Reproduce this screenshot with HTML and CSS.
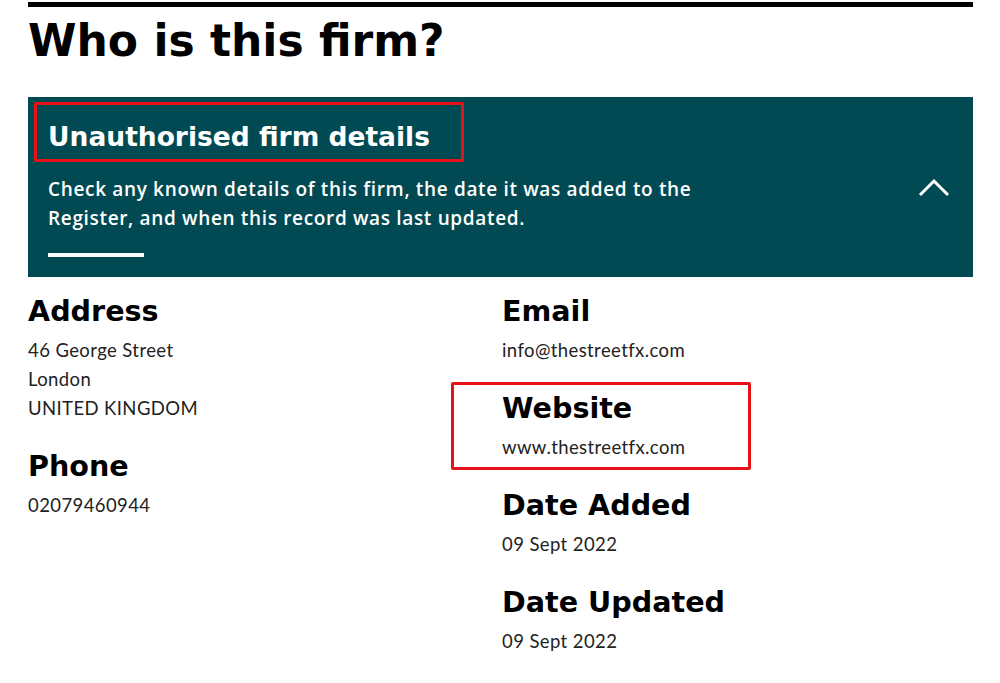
FILE: index.html
```html
<!DOCTYPE html>
<html lang="en">
<head>
<meta charset="utf-8">
<title>Who is this firm?</title>
<link rel="stylesheet" href="styles.css">
</head>
<body>
<main class="page">
  <h1 class="page-title">Who is this firm?</h1>

  <section class="panel">
    <div class="panel-body">
      <h2 class="panel-title">Unauthorised firm details</h2>
      <p class="panel-text">Check any known details of this firm, the date it was added to the<br>Register, and when this record was last updated.</p>
      <div class="panel-rule"></div>
    </div>
    <button class="panel-toggle" type="button" aria-label="Collapse">
      <svg width="32" height="20" viewBox="0 0 32 20"><polyline points="2,17 16,3 30,17" fill="none" stroke="#ffffff" stroke-width="3"/></svg>
    </button>
    <span class="mark mark-title"></span>
  </section>

  <section class="details">
    <div class="col">
      <div class="field">
        <h3 class="field-label">Address</h3>
        <p class="field-value">46 George Street<br>London<br>UNITED KINGDOM</p>
      </div>
      <div class="field">
        <h3 class="field-label">Phone</h3>
        <p class="field-value">02079460944</p>
      </div>
    </div>
    <div class="col">
      <div class="field">
        <h3 class="field-label">Email</h3>
        <p class="field-value">info@thestreetfx.com</p>
      </div>
      <div class="field field-marked">
        <h3 class="field-label">Website</h3>
        <p class="field-value">www.thestreetfx.com</p>
        <span class="mark mark-website"></span>
      </div>
      <div class="field">
        <h3 class="field-label">Date Added</h3>
        <p class="field-value">09 Sept 2022</p>
      </div>
      <div class="field">
        <h3 class="field-label">Date Updated</h3>
        <p class="field-value">09 Sept 2022</p>
      </div>
    </div>
  </section>
</main>
</body>
</html>
```

FILE: styles.css
```css
html, body {
  margin: 0;
  padding: 0;
  background: #ffffff;
}

.page {
  width: 945px;
  margin: 0 0 0 28px;
  padding-top: 2px;
}

.page-title {
  margin: 0;
  padding-top: 8px;
  border-top: 5px solid #000000;
  font-family: "DejaVu Sans", sans-serif;
  font-weight: bold;
  font-size: 44px;
  line-height: 52px;
  color: #000000;
}

.panel {
  position: relative;
  display: flex;
  justify-content: space-between;
  align-items: flex-start;
  margin-top: 30px;
  padding: 24px 23px 20px 20px;
  background: #014a53;
  color: #ffffff;
}

.panel-title {
  margin: 0;
  font-family: "DejaVu Sans", sans-serif;
  font-weight: bold;
  font-size: 26.5px;
  line-height: 32px;
}

.panel-text {
  margin: 22px 0 0 0;
  font-family: "Open Sans", sans-serif;
  font-weight: 600;
  font-size: 19px;
  letter-spacing: 0.66px;
  line-height: 29px;
}

.panel-rule {
  width: 96px;
  height: 4px;
  margin-top: 20px;
  background: #ffffff;
}

.panel-toggle {
  margin-top: 57px;
  padding: 0;
  border: 0;
  background: transparent;
  line-height: 0;
}

.mark {
  position: absolute;
  border: 3px solid #e8111a;
  border-radius: 2px;
  pointer-events: none;
}

.mark-title {
  left: 6px;
  top: 5px;
  width: 424px;
  height: 54px;
}

.details {
  display: grid;
  grid-template-columns: 474px 1fr;
  padding-top: 17px;
}

.field {
  margin-bottom: 26px;
}

.field-marked {
  position: relative;
}

.mark-website {
  left: -51px;
  top: -9px;
  width: 294px;
  height: 82px;
}

.field-label {
  margin: 0;
  font-family: "DejaVu Sans", sans-serif;
  font-weight: bold;
  font-size: 28.6px;
  line-height: 34px;
  color: #000000;
}

.field-value {
  margin: 8px 0 0 0;
  font-family: Lato, sans-serif;
  font-size: 18.5px;
  letter-spacing: 0.4px;
  line-height: 29px;
  color: #222222;
}
```
